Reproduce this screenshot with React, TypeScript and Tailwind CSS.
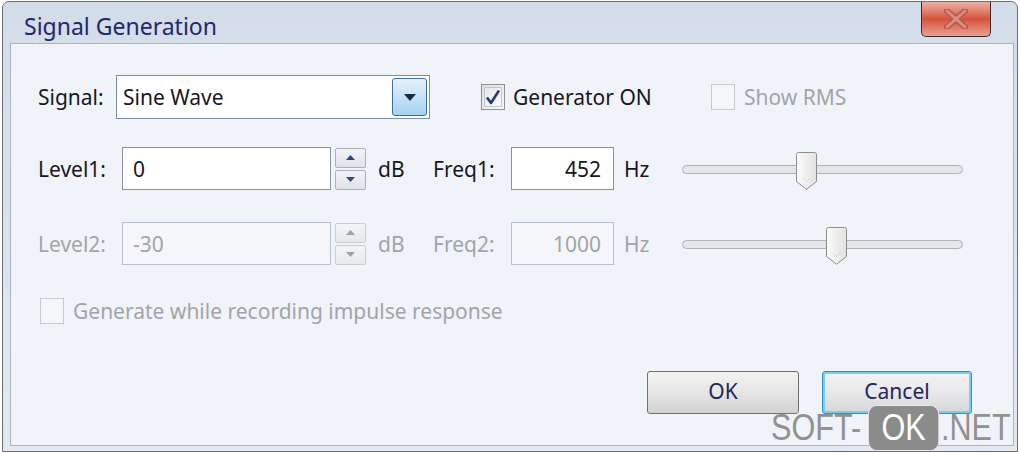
import React from "react";

function Checkbox({ checked, disabled }: { checked?: boolean; disabled?: boolean }) {
  return (
    <div
      className={
        "w-[24px] h-[26px] shrink-0 border flex items-center justify-center " +
        (disabled
          ? "border-[#c6c9cd] bg-[#f5f6f8]"
          : "border-[#8d9094] bg-linear-to-br from-[#dcdfe3] to-[#f7f8f9]")
      }
    >
      {!disabled && (
        <div className="w-[18px] h-[20px] border border-[#c3c7cc] bg-linear-to-br from-[#e4e7ea] to-[#fbfbfc] flex items-center justify-center">
          {checked && (
            <svg width="16" height="18" viewBox="0 0 16 18">
              <path d="M2 9.5 L6 15 L14 2.5" fill="none" stroke="#2d3a78" strokeWidth="2.6" strokeLinejoin="round" />
            </svg>
          )}
        </div>
      )}
    </div>
  );
}

function Spin({ disabled }: { disabled?: boolean }) {
  const arrow = disabled ? "#9aa3b4" : "#2f4590";
  const cls =
    "h-[20px] rounded-[2px] border flex items-center justify-center " +
    (disabled
      ? "border-[#c8cdd4] bg-linear-to-b from-[#f4f5f7] to-[#e7e9ec]"
      : "border-[#aab1bb] bg-linear-to-b from-[#f3f4f6] to-[#dfe2e6]");
  return (
    <div className="ml-[4px] w-[31px] flex flex-col gap-[2px]">
      <div className={cls}>
        <svg width="9" height="5" viewBox="0 0 9 5">
          <path d="M0 5 L4.5 0 L9 5 Z" fill={arrow} />
        </svg>
      </div>
      <div className={cls}>
        <svg width="9" height="5" viewBox="0 0 9 5">
          <path d="M0 0 L4.5 5 L9 0 Z" fill={arrow} />
        </svg>
      </div>
    </div>
  );
}

function Slider({ pos }: { pos: number }) {
  return (
    <div className="relative w-[281px] h-[43px]">
      <div className="absolute left-0 right-0 top-[18px] h-[9px] rounded-[5px] border border-[#adb0b4] bg-[#e4e6e8]" />
      <svg
        className="absolute top-[5px]"
        style={{ left: pos }}
        width="21"
        height="38"
        viewBox="0 0 21 38"
      >
        <defs>
          <linearGradient id={"tg" + pos} x1="0" y1="0" x2="1" y2="0">
            <stop offset="0" stopColor="#fbfbfb" />
            <stop offset="1" stopColor="#e2e2e2" />
          </linearGradient>
        </defs>
        <path
          d="M2.5 0.5 H18.5 Q20.5 0.5 20.5 2.5 V29.5 L10.5 37.3 L0.5 29.5 V2.5 Q0.5 0.5 2.5 0.5 Z"
          fill={"url(#tg" + pos + ")"}
          stroke="#8c8c8c"
        />
        <path d="M7 26 L10.5 29.5 L14 26" fill="none" stroke="#d8d8d8" />
      </svg>
    </div>
  );
}

function Row({
  label,
  value,
  freq,
  freqLabel,
  levelLabel,
  pos,
  disabled,
}: {
  label: string;
  value: string;
  freq: string;
  freqLabel: string;
  levelLabel: string;
  pos: number;
  disabled?: boolean;
}) {
  const txt = disabled ? "text-[#a2a4a8]" : "text-[#17181e]";
  const inputBorder = disabled ? "border-[#b6c2cf]" : "border-[#8494a6]";
  return (
    <div className={"flex items-center h-[43px] " + txt}>
      <div className="w-[84px]">{levelLabel}</div>
      <div className={"w-[209px] h-[43px] border flex items-center pl-[10px] " + inputBorder + (disabled ? " bg-[#f4f6f9]" : " bg-white")}>
        {value}
      </div>
      <Spin disabled={disabled} />
      <div className="ml-[12px] w-[55px]">{label}</div>
      <div className="w-[78px]">{freqLabel}</div>
      <div className={"w-[103px] h-[43px] border flex items-center justify-end pr-[12px] " + inputBorder + (disabled ? " bg-[#f4f6f9]" : " bg-white")}>
        {freq}
      </div>
      <div className="ml-[10px] w-[58px]">Hz</div>
      <Slider pos={pos} />
    </div>
  );
}

export default function App() {
  return (
    <div className="w-[1020px] h-[453px] bg-white relative overflow-hidden font-['Noto_Sans',sans-serif] text-[21px] leading-[30px]">
      <div className="ml-[2px] mt-[1px] w-[1016px] h-[451px] border border-[#6b6d70] rounded-t-[7px] bg-linear-to-b from-[#d3dde9] to-[#e2e9f1] flex flex-col">
        <div className="h-[41px] flex items-start shrink-0">
          <div className="pl-[21px] pt-[9px] text-[23px] leading-[30px] text-[#22286a]">Signal Generation</div>
          <div className="ml-auto mr-[26px] w-[70px] h-[35px] border border-[#3c2c2c] border-t-0 rounded-b-[5px] bg-linear-to-b from-[#eab2a6] via-[#d5513b] to-[#e7a093] flex items-center justify-center">
            <svg width="28" height="20" viewBox="0 0 28 20">
              <path d="M5 2 L23 18 M23 2 L5 18" stroke="#b65a4c" strokeWidth="6" strokeLinecap="round" />
              <path d="M5 2 L23 18 M23 2 L5 18" stroke="#de8d80" strokeWidth="3" strokeLinecap="round" />
            </svg>
          </div>
        </div>
        <div className="flex-1 ml-[7px] mr-[3px] mb-[5px] border border-[#a9b5c3] bg-[#f0f4f9] pl-[27px] pt-[31px]">
          <div className="flex items-center h-[44px] text-[#17181e]">
            <div className="w-[78px]">Signal:</div>
            <div className="w-[314px] h-[44px] border border-[#7d8ea2] bg-white flex items-center">
              <div className="pl-[6px]">Sine Wave</div>
              <div className="ml-auto mr-[2px] w-[35px] h-[38px] rounded-[3px] border border-[#3f6f9c] bg-linear-to-b from-[#e4f2fc] to-[#a6d2f2] flex items-center justify-center">
                <svg width="12" height="7" viewBox="0 0 12 7">
                  <path d="M0 0 L6 7 L12 0 Z" fill="#1c2a3c" />
                </svg>
              </div>
            </div>
            <div className="ml-[51px] w-[230px] flex items-center">
              <Checkbox checked />
              <div className="ml-[8px]">Generator ON</div>
            </div>
            <div className="flex items-center text-[#a2a4a8]">
              <Checkbox disabled />
              <div className="ml-[9px]">Show RMS</div>
            </div>
          </div>
          <div className="mt-[28px]">
            <Row levelLabel="Level1:" value="0" label="dB" freqLabel="Freq1:" freq="452" pos={114} />
          </div>
          <div className="mt-[32px]">
            <Row levelLabel="Level2:" value="-30" label="dB" freqLabel="Freq2:" freq="1000" pos={144} disabled />
          </div>
          <div className="mt-[31px] ml-[2px] flex items-center text-[#a2a4a8]">
            <Checkbox disabled />
            <div className="ml-[9px]">Generate while recording impulse response</div>
          </div>
          <div className="mt-[45px] flex justify-end pr-[41px] gap-[23px] text-[#1f2560]">
            <div className="w-[152px] h-[43px] pb-[3px] rounded-[3px] border border-[#707070] bg-linear-to-b from-[#f3f3f3] via-[#e6e6e6] to-[#d2d2d2] flex items-center justify-center">
              OK
            </div>
            <div className="w-[150px] h-[43px] pb-[3px] rounded-[3px] border border-[#3b8cc4] shadow-[inset_0_0_0_2px_#6fd2f5] bg-linear-to-b from-[#f3f3f3] via-[#e8e8e8] to-[#d6d6d6] flex items-center justify-center">
              Cancel
            </div>
          </div>
        </div>
      </div>
      <div className="absolute left-[771px] top-[405px] flex items-center origin-left scale-x-[0.85] font-['Liberation_Sans',Arial,sans-serif] text-[36px] leading-[44px] text-[#919191]">
        <span>SOFT-</span>
        <span className="ml-[8px] h-[46px] px-[15px] rounded-[10px] bg-[#8b8b8b] text-white border border-[#f0f0f0]">OK</span>
        <span className="ml-[2px]">.NET</span>
      </div>
    </div>
  );
}
